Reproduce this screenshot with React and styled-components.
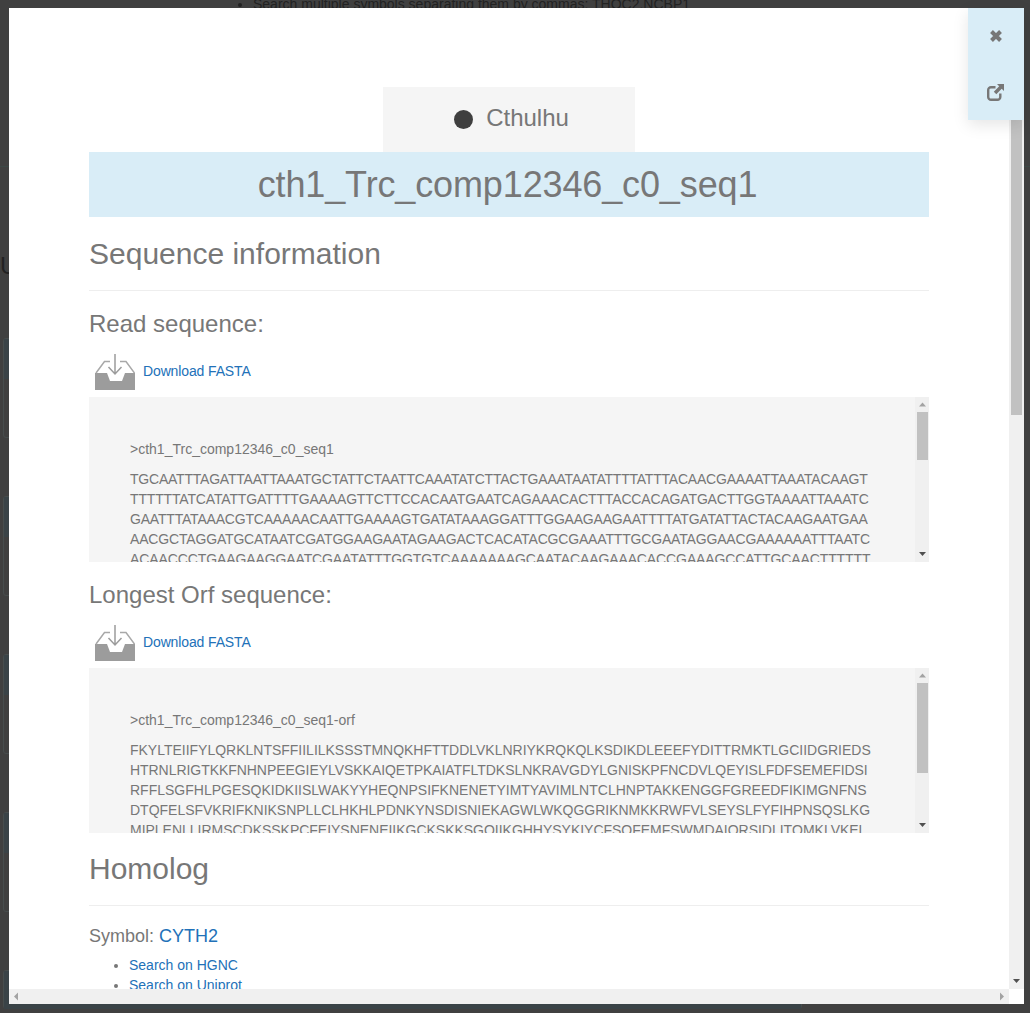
import React from "react";
import styled, { createGlobalStyle } from "styled-components";

const GlobalStyle = createGlobalStyle`
  html, body {
    margin: 0;
    height: 100%;
    overflow: hidden;
    background: #404040;
    font-family: "Liberation Sans", Arial, sans-serif;
    font-size: 14px;
    line-height: 20px;
    color: #777;
  }
`;

// each line carries its own tracking so the right edge lands like the original
const readLines = [
  ["TGCAATTTAGATTAATTAAATGCTATTCTAATTCAAATATCTTACTGAAATAATATTTTATTTACAACGAAAATTAAATACAAGT", -0.216],
  ["TTTTTTATCATATTGATTTTGAAAAGTTCTTCCACAATGAATCAGAAACACTTTACCACAGATGACTTGGTAAAATTAAATC", -0.158],
  ["GAATTTATAAACGTCAAAAACAATTGAAAAGTGATATAAAGGATTTGGAAGAAGAATTTTATGATATTACTACAAGAATGAA", -0.194],
  ["AACGCTAGGATGCATAATCGATGGAAGAATAGAAGACTCACATACGCGAAATTTGCGAATAGGAACGAAAAAATTTAATC", -0.17],
  ["ACAACCCTGAAGAAGGAATCGAATATTTGGTGTCAAAAAAAGCAATACAAGAAACACCGAAAGCCATTGCAACTTTTTT", -0.107],
];

const orfLines = [
  ["FKYLTEIIFYLQRKLNTSFFIILILKSSSTMNQKHFTTDDLVKLNRIYKRQKQLKSDIKDLEEEFYDITTRMKTLGCIIDGRIEDS", -0.01],
  ["HTRNLRIGTKKFNHNPEEGIEYLVSKKAIQETPKAIATFLTDKSLNKRAVGDYLGNISKPFNCDVLQEYISLFDFSEMEFIDSI", -0.05],
  ["RFFLSGFHLPGESQKIDKIISLWAKYYHEQNPSIFKNENETYIMTYAVIMLNTCLHNPTAKKENGGFGREEDFIKIMGNFNS", 0],
  ["DTQFELSFVKRIFKNIKSNPLLCLHKHLPDNKYNSDISNIEKAGWLWKQGGRIKNMKKRWFVLSEYSLFYFIHPNSQSLKG", -0.01],
  ["MIPLENLLIRMSCDKSSKPCFEIYSNENEIIKGCKSKKSGQIIKGHHYSYKIYCFSQFEMFSWMDAIQRSIDLITQMKLVKEL", -0.02],
];

/* the dimmed page behind the modal */
const Page = styled.div`
  height: 100%;
  overflow: hidden;
`;

const PageHeader = styled.div`
  height: 172px;
  margin-top: -6px;
  border-bottom: 1px solid #3c4846;
`;

const HelpList = styled.ul`
  margin: 0;
  padding-left: 253px;
  color: #222;
`;

const PageHeading = styled.div`
  margin: 86px 0 59px;
  font-size: 24px;
  line-height: 26px;
  color: #222;
`;

const Card = styled.div`
  width: 799px;
  height: ${(p) => p.$height}px;
  margin: 0 0 58px 3px;
  border: 1px solid #474d4d;
  border-radius: 3px;
  box-sizing: border-box;

  &:last-child {
    margin-bottom: 0;
  }
`;

const CardHead = styled.div`
  height: 40px;
  background: #3a4347;
  display: flex;
  justify-content: flex-end;
  align-items: flex-end;
  padding: 0 77px 7px 0;
  box-sizing: border-box;
`;

const CardBlob = styled.span`
  width: 14px;
  height: 14px;
  border-radius: 50%;
  background: #151515;
`;

const Modal = styled.div`
  position: fixed;
  top: 8px;
  left: 9px;
  right: 6px;
  bottom: 9px;
  background: #fff;
  display: grid;
  grid-template-columns: 1fr 15px;
  grid-template-rows: 1fr 15px;
`;

const Viewport = styled.div`
  overflow: hidden;
`;

const Content = styled.div`
  width: 840px;
  margin: 0 auto;
  padding-top: 79px;
`;

const VBar = styled.div`
  width: ${(p) => p.$width}px;
  flex: none;
  background: #f0f0f0;
  display: flex;
  flex-direction: column;
`;

const HBar = styled.div`
  background: #f0f0f0;
  display: flex;
  justify-content: space-between;
`;

const BarButton = styled.svg`
  width: 15px;
  height: 15px;
  flex: none;
  display: block;
`;

const Thumb = styled.div`
  height: ${(p) => p.$size}px;
  margin: ${(p) => p.$margin};
  background: #c1c1c1;
`;

const BarRest = styled.div`
  flex: 1;
`;

const ActionBar = styled.div`
  position: absolute;
  top: 0;
  right: 0;
  width: 56px;
  height: 112px;
  background: #d9edf7;
  box-shadow: 0 5px 15px rgba(0, 0, 0, 0.1);
  display: flex;
  flex-direction: column;
`;

const ActionItem = styled.div`
  height: 56px;
  display: flex;
  align-items: center;
  justify-content: center;
  padding-right: 1px;
`;

const TabRow = styled.div`
  display: flex;
  justify-content: center;
`;

const Tab = styled.div`
  width: 252px;
  height: 65px;
  background: #f5f5f5;
  display: flex;
  align-items: center;
  justify-content: center;
  gap: 13px;
  font-size: 24px;
  padding: 0 0 4px 5px;
  box-sizing: border-box;
`;

const Dot = styled.span`
  width: 19px;
  height: 19px;
  margin-top: 4px;
  border-radius: 50%;
  background: #3f3f3f;
`;

const TitleBar = styled.h1`
  margin: 0;
  height: 65px;
  padding-right: 3px;
  background: #d9edf7;
  font-size: 36px;
  font-weight: 400;
  line-height: 65px;
  letter-spacing: -0.13px;
  text-align: center;
`;

const SectionTitle = styled.h2`
  margin: ${(p) => p.$top}px 0 0;
  padding-bottom: 20px;
  border-bottom: 1px solid #eee;
  font-size: 30px;
  line-height: 33px;
  font-weight: 400;
`;

const SubTitle = styled.h3`
  margin: 20px 0 0;
  font-size: 24px;
  line-height: 26px;
  font-weight: 400;
`;

const DownloadRow = styled.div`
  display: flex;
  align-items: center;
  gap: 8px;
  height: 36px;
  margin: 16px 0 0 6px;
`;

const DownloadLink = styled.a`
  color: #2271b8;
  text-decoration: none;
  letter-spacing: -0.13px;
`;

const Link = styled.a`
  color: #2271b8;
  text-decoration: none;
`;

const InboxSvg = styled.svg`
  width: 40px;
  height: 36px;
  margin-top: 2px;
`;

const SeqBox = styled.div`
  height: 165px;
  margin-top: 8px;
  display: flex;
  background: #f5f5f5;
`;

const SeqText = styled.div`
  flex: 1;
  overflow: hidden;
  padding: 42px 0 0 41px;
`;

const SeqHeader = styled.p`
  margin: 0 0 10px;
`;

const SeqLine = styled.div`
  white-space: nowrap;
  letter-spacing: ${(p) => p.$tracking}px;
`;

const SymbolLine = styled.div`
  margin-top: 20px;
  font-size: 18px;
  line-height: 20px;
`;

const SearchList = styled.ul`
  margin: 9px 0 0;
  padding-left: 40px;
`;

const Arrow = ({ points, color }) => (
  <BarButton viewBox="0 0 15 15">
    <polygon points={points} fill={color} />
  </BarButton>
);

const UpArrow = () => <Arrow points="7.5,5.5 11,9.5 4,9.5" color="#a3a3a3" />;
const DownArrow = () => <Arrow points="4,5 11,5 7.5,9" color="#505050" />;

const VerticalBar = ({ width, thumb, margin }) => (
  <VBar $width={width}>
    <UpArrow />
    <Thumb $size={thumb} $margin={margin} />
    <BarRest />
    <DownArrow />
  </VBar>
);

const InboxIcon = () => (
  <InboxSvg viewBox="0 0 40 36">
    <path d="M0 19 H12 L15 27 H27 L30 19 H40 V36 H0 Z" fill="#9c9c9c" />
    <path
      d="M15 7.5 H9.5 L1 19 M25 7.5 H31 L39.5 19"
      fill="none"
      stroke="#a8a8a8"
      strokeWidth="1.5"
    />
    <path d="M20 0 V20 M13.5 13 L20 20 L26.5 13" fill="none" stroke="#9c9c9c" strokeWidth="1.5" />
  </InboxSvg>
);

const CloseIcon = () => (
  <svg width="14" height="14" viewBox="0 0 14 14">
    <path d="M2.5 2.5 L11.5 11.5 M11.5 2.5 L2.5 11.5" stroke="#777" strokeWidth="4" />
  </svg>
);

const ExternalIcon = () => (
  <svg width="17" height="17" viewBox="0 0 17 17">
    <path
      d="M8.5 3.2 H4 A2.8 2.8 0 0 0 1.2 6 V13 A2.8 2.8 0 0 0 4 15.8 H10.5 A2.8 2.8 0 0 0 13.3 13 V9.5"
      fill="none"
      stroke="#777"
      strokeWidth="2.4"
    />
    <path d="M10 0 H17 V7 L14.7 4.8 L9.3 10.2 L6.8 7.7 L12.2 2.3 Z" fill="#777" />
  </svg>
);

const Sequence = ({ name, lines, thumb }) => (
  <SeqBox>
    <SeqText>
      <SeqHeader>&gt;{name}</SeqHeader>
      {lines.map(([line, tracking]) => (
        <SeqLine key={line} $tracking={tracking}>
          {line}
        </SeqLine>
      ))}
    </SeqText>
    <VerticalBar width={14} thumb={thumb} margin="0 1px 0 2px" />
  </SeqBox>
);

const App = () => {
  return (
    <>
      <GlobalStyle />
      <Page>
        <PageHeader>
          <HelpList>
            <li>Search multiple symbols separating them by commas: THOC2,NCBP1</li>
          </HelpList>
        </PageHeader>
        <PageHeading>Us</PageHeading>
        <Card $height={100}>
          <CardHead />
        </Card>
        <Card $height={100}>
          <CardHead />
        </Card>
        <Card $height={100}>
          <CardHead />
        </Card>
        <Card $height={100}>
          <CardHead />
        </Card>
        <Card $height={39}>
          <CardHead>
            <CardBlob />
          </CardHead>
        </Card>
      </Page>
      <Modal>
        <Viewport>
          <Content>
            <TabRow>
              <Tab>
                <Dot />
                Cthulhu
              </Tab>
            </TabRow>
            <TitleBar>cth1_Trc_comp12346_c0_seq1</TitleBar>
            <SectionTitle $top={20}>Sequence information</SectionTitle>
            <SubTitle>Read sequence:</SubTitle>
            <DownloadRow>
              <InboxIcon />
              <DownloadLink href="#">Download FASTA</DownloadLink>
            </DownloadRow>
            <Sequence name="cth1_Trc_comp12346_c0_seq1" lines={readLines} thumb={48} />
            <SubTitle>Longest Orf sequence:</SubTitle>
            <DownloadRow>
              <InboxIcon />
              <DownloadLink href="#">Download FASTA</DownloadLink>
            </DownloadRow>
            <Sequence name="cth1_Trc_comp12346_c0_seq1-orf" lines={orfLines} thumb={90} />
            <SectionTitle $top={19}>Homolog</SectionTitle>
            <SymbolLine>
              Symbol: <Link href="#">CYTH2</Link>
            </SymbolLine>
            <SearchList>
              <li>
                <Link href="#">Search on HGNC</Link>
              </li>
              <li>
                <Link href="#">Search on Uniprot</Link>
              </li>
            </SearchList>
          </Content>
        </Viewport>
        <VerticalBar width={15} thumb={392} margin="0 2px" />
        <HBar>
          <Arrow points="9,3.5 5,7.5 9,11.5" color="#a3a3a3" />
          <Arrow points="6,3.5 10,7.5 6,11.5" color="#a3a3a3" />
        </HBar>
        <ActionBar>
          <ActionItem>
            <CloseIcon />
          </ActionItem>
          <ActionItem>
            <ExternalIcon />
          </ActionItem>
        </ActionBar>
      </Modal>
    </>
  );
};

export default App;
